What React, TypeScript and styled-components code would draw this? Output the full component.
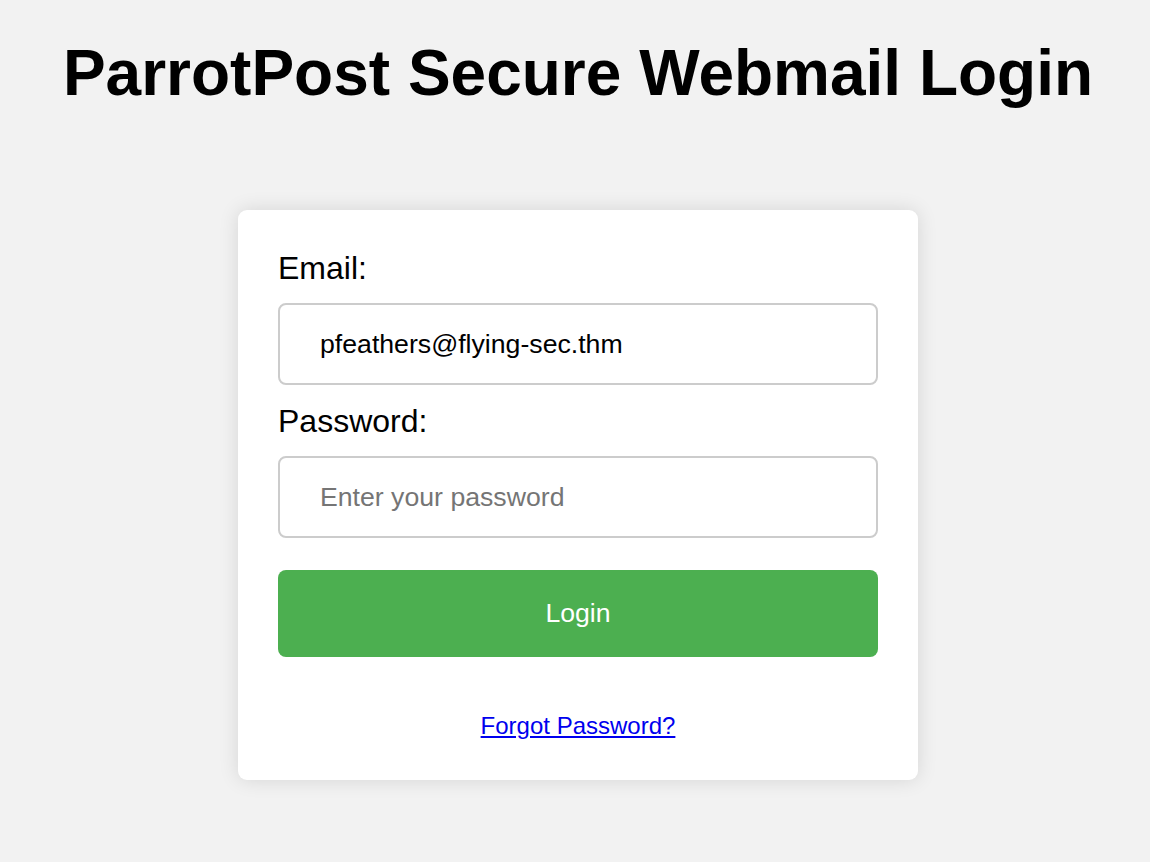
import React from "react";
import styled, { createGlobalStyle } from "styled-components";

const GlobalStyle = createGlobalStyle`
  html, body {
    margin: 0;
    padding: 0;
    background: #f2f2f2;
  }
  body {
    font-family: "Liberation Sans", Arial, Helvetica, sans-serif;
    color: #000;
  }
  * { box-sizing: border-box; }
`;

const Page = styled.div`
  display: flex;
  flex-direction: column;
  align-items: center;
  padding: 36px 0 0 6px;
  min-height: 862px;
`;

const Title = styled.h1`
  margin: 0 0 100px;
  font-size: 64px;
  font-weight: 700;
  line-height: normal;
  text-align: center;
`;

const Card = styled.form`
  width: 680px;
  background: #fff;
  border-radius: 9px;
  padding: 40px;
  box-shadow: 0 0 20px rgba(0, 0, 0, 0.12);
  display: flex;
  flex-direction: column;
`;

const Label = styled.label`
  display: block;
  font-size: 32px;
  line-height: normal;
  margin-bottom: 16px;
`;

const Input = styled.input<{ $gap?: number }>`
  display: block;
  width: 100%;
  height: 82px;
  padding: 24px 40px;
  border: 2px solid #cccccc;
  border-radius: 8px;
  font-family: "Liberation Sans", Arial, Helvetica, sans-serif;
  font-size: 26.67px;
  color: #000;
  background: #fff;
  outline: none;
  margin-bottom: ${(p) => p.$gap ?? 18}px;
  &::placeholder {
    color: #757575;
  }
`;

const Button = styled.button`
  display: block;
  width: 100%;
  height: 87px;
  border: none;
  border-radius: 8px;
  background: #4caf50;
  color: #fff;
  font-family: "Liberation Sans", Arial, Helvetica, sans-serif;
  font-size: 26.67px;
  cursor: pointer;
`;

const LinkRow = styled.div`
  margin-top: 55px;
  text-align: center;
  line-height: normal;
`;

const ForgotLink = styled.a`
  font-size: 24px;
  color: #0000ee;
  text-decoration: underline;
`;

export default function App() {
  return (
    <>
      <GlobalStyle />
      <Page>
        <Title>ParrotPost Secure Webmail Login</Title>
        <Card onSubmit={(e) => e.preventDefault()}>
          <Label htmlFor="email">Email:</Label>
          <Input id="email" type="email" defaultValue="pfeathers@flying-sec.thm" />
          <Label htmlFor="password">Password:</Label>
          <Input id="password" type="password" placeholder="Enter your password" $gap={32} />
          <Button type="submit">Login</Button>
          <LinkRow>
            <ForgotLink href="#">Forgot Password?</ForgotLink>
          </LinkRow>
        </Card>
      </Page>
    </>
  );
}
